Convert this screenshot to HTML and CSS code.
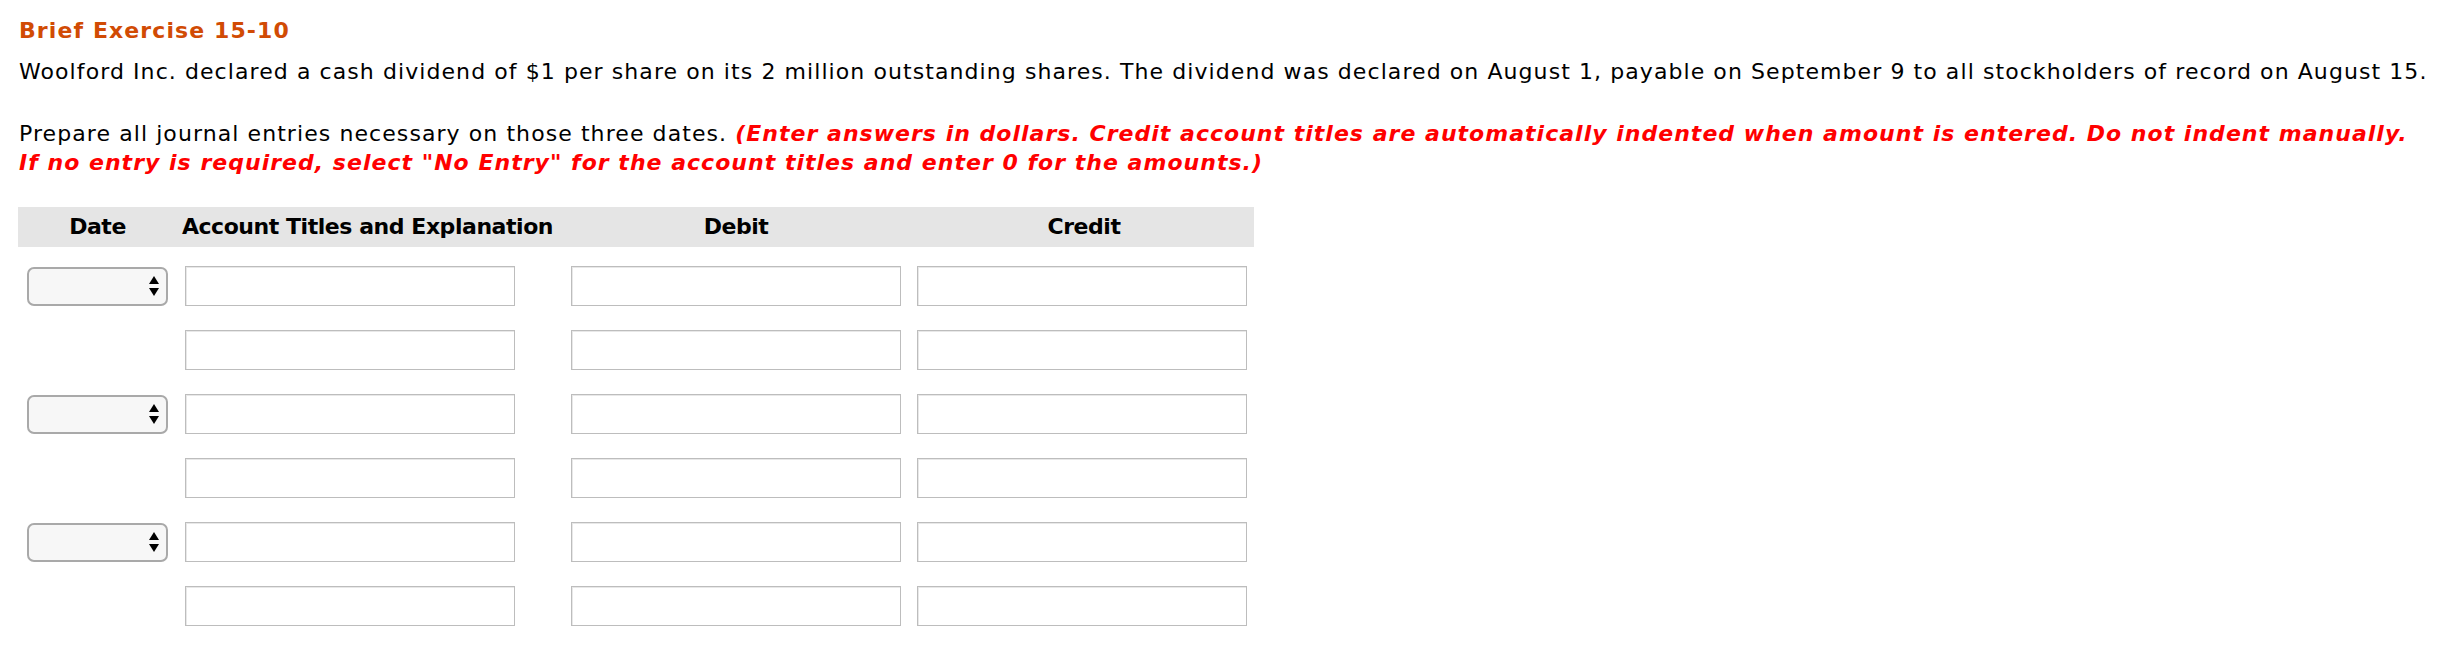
FILE: index.html
```html
<!DOCTYPE html>
<html lang="en">
<head>
<meta charset="utf-8">
<title>Brief Exercise 15-10</title>
<link rel="stylesheet" href="styles.css">
</head>
<body>
<div class="page">
  <h1 class="title">Brief Exercise 15-10</h1>
  <p class="intro">Woolford Inc. declared a cash dividend of $1 per share on its 2 million outstanding shares. The dividend was declared on August 1, payable on September 9 to all stockholders of record on August 15.</p>
  <p class="instr">Prepare all journal entries necessary on those three dates. <em class="note">(Enter answers in dollars. Credit account titles are automatically indented when amount is entered. Do not indent manually.<br>If no entry is required, select "No Entry" for the account titles and enter 0 for the amounts.)</em></p>

  <div class="journal">
    <div class="jrow head">
      <div class="hc">Date</div>
      <div class="hc">Account Titles and Explanation</div>
      <div class="hc">Debit</div>
      <div class="hc">Credit</div>
    </div>

    <div class="jrow">
      <div class="c c1"><div class="sel"><span class="arrows"><span class="up"></span><span class="dn"></span></span></div></div>
      <div class="c c2"><div class="inp"></div></div>
      <div class="c c3"><div class="inp"></div></div>
      <div class="c c4"><div class="inp"></div></div>
    </div>
    <div class="jrow">
      <div class="c c1"></div>
      <div class="c c2"><div class="inp"></div></div>
      <div class="c c3"><div class="inp"></div></div>
      <div class="c c4"><div class="inp"></div></div>
    </div>
    <div class="jrow">
      <div class="c c1"><div class="sel"><span class="arrows"><span class="up"></span><span class="dn"></span></span></div></div>
      <div class="c c2"><div class="inp"></div></div>
      <div class="c c3"><div class="inp"></div></div>
      <div class="c c4"><div class="inp"></div></div>
    </div>
    <div class="jrow">
      <div class="c c1"></div>
      <div class="c c2"><div class="inp"></div></div>
      <div class="c c3"><div class="inp"></div></div>
      <div class="c c4"><div class="inp"></div></div>
    </div>
    <div class="jrow">
      <div class="c c1"><div class="sel"><span class="arrows"><span class="up"></span><span class="dn"></span></span></div></div>
      <div class="c c2"><div class="inp"></div></div>
      <div class="c c3"><div class="inp"></div></div>
      <div class="c c4"><div class="inp"></div></div>
    </div>
    <div class="jrow">
      <div class="c c1"></div>
      <div class="c c2"><div class="inp"></div></div>
      <div class="c c3"><div class="inp"></div></div>
      <div class="c c4"><div class="inp"></div></div>
    </div>
  </div>
</div>
</body>
</html>
```
FILE: styles.css
```css
html, body {
  margin: 0;
  padding: 0;
  background: #fff;
}
body {
  font-family: "DejaVu Sans", Verdana, sans-serif;
  font-size: 22px;
  color: #000;
}
.page {
  padding: 16px 0 0 19px;
}
.title {
  margin: 0;
  font-size: 22px;
  line-height: 30px;
  font-weight: bold;
  letter-spacing: 1.1px;
  color: #d14b04;
}
.intro {
  margin: 11px 0 0 0;
  line-height: 29px;
  white-space: nowrap;
  letter-spacing: 1.08px;
}
.instr {
  margin: 33px 0 0 0;
  line-height: 29px;
  white-space: nowrap;
  letter-spacing: 1.08px;
}
.note {
  color: #ff0000;
  font-weight: bold;
  font-style: italic;
  letter-spacing: 1.02px;
}
.journal {
  margin: 30px 0 0 -1px;
  width: 1236px;
  display: flex;
  flex-direction: column;
  gap: 24px;
}
.journal .head {
  margin-bottom: -5px;
}
.jrow {
  display: grid;
  grid-template-columns: 159px 381px 356px 340px;
  align-items: center;
}
.head {
  background: #e5e5e5;
  height: 40px;
  font-weight: bold;
}
.hc {
  text-align: center;
  line-height: 40px;
  white-space: nowrap;
  letter-spacing: -0.45px;
}
.c {
  height: 40px;
  display: flex;
  align-items: center;
}
.c1 { padding-left: 9px; }
.c2 { padding-left: 8px; }
.c3 { padding-left: 13px; }
.c4 { padding-left: 3px; }
.inp {
  box-sizing: border-box;
  width: 330px;
  height: 40px;
  border: 1px solid #bdbdbd;
  box-shadow: inset 1px 1px 0 #e8e8e8;
  background: #fff;
}
.sel {
  box-sizing: border-box;
  width: 141px;
  height: 39px;
  border: 2px solid #a9a9a9;
  border-radius: 7px;
  background: #f7f7f7;
  display: flex;
  align-items: center;
  justify-content: flex-end;
  padding-right: 7px;
}
.arrows {
  display: flex;
  flex-direction: column;
  gap: 4px;
}
.up, .dn {
  width: 0;
  height: 0;
  border-left: 5px solid transparent;
  border-right: 5px solid transparent;
}
.up { border-bottom: 8px solid #000; }
.dn { border-top: 8px solid #000; }
```
